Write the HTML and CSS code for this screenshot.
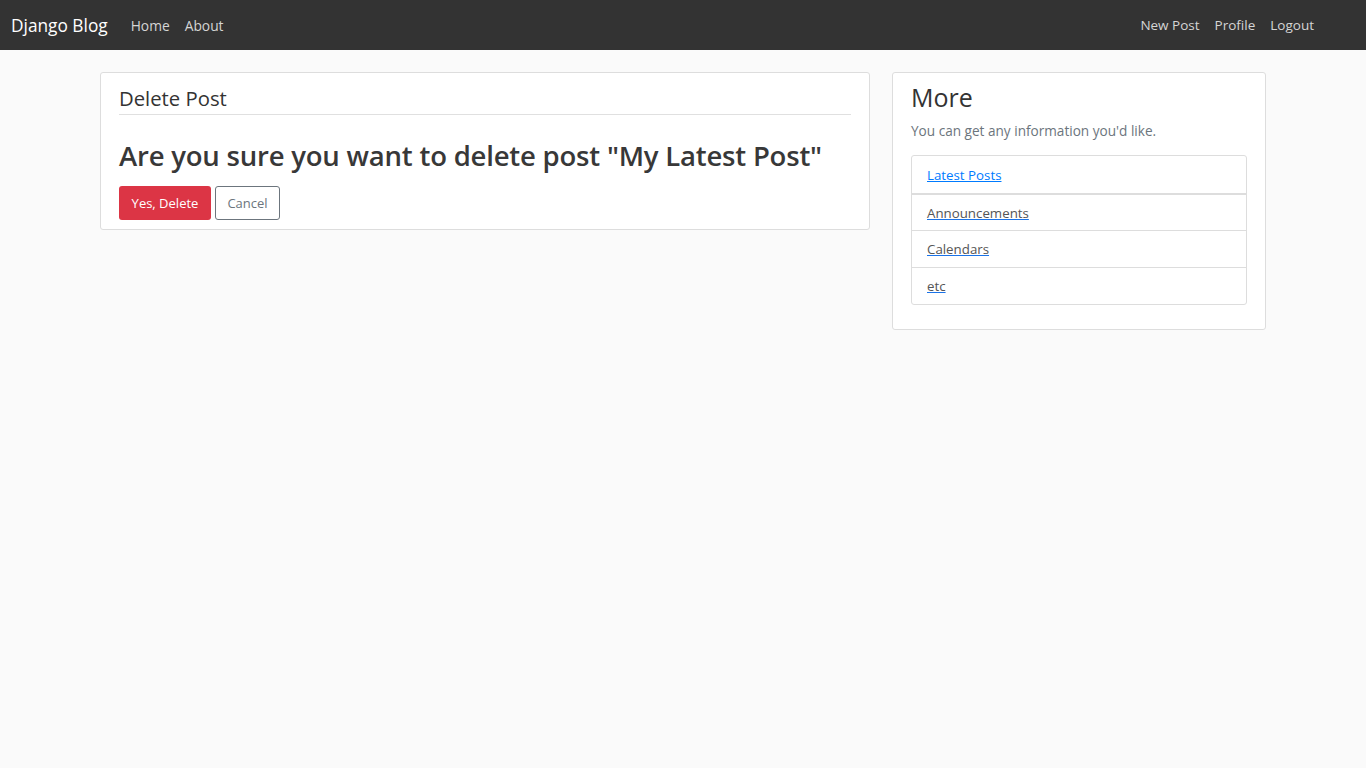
FILE: index.html
```html
<!DOCTYPE html>
<html lang="en">
<head>
<meta charset="utf-8">
<title>Django Blog</title>
<link rel="stylesheet" href="styles.css">
</head>
<body>
<header class="navbar">
  <div class="nav-left">
    <a class="brand" href="#">Django Blog</a>
    <a class="nav-link" href="#">Home</a>
    <a class="nav-link" href="#">About</a>
  </div>
  <div class="nav-right">
    <a class="nav-link" href="#">New Post</a>
    <a class="nav-link" href="#">Profile</a>
    <a class="nav-link" href="#">Logout</a>
  </div>
</header>
<main class="page">
  <section class="content-section main-col">
    <form class="delete-form">
      <fieldset class="fieldset">
        <legend class="legend">Delete Post</legend>
        <h2 class="confirm">Are you sure you want to delete post "My Latest Post"</h2>
      </fieldset>
      <div class="actions">
        <button type="button" class="btn btn-danger">Yes, Delete</button>
        <a class="btn btn-outline" href="#">Cancel</a>
      </div>
    </form>
  </section>
  <aside class="content-section side-col">
    <h3 class="side-title">More</h3>
    <p class="muted">You can get any information you'd like.</p>
    <ul class="list-group">
      <li class="list-item first"><a class="blue" href="#">Latest Posts</a></li>
      <li class="list-item"><a href="#">Announcements</a></li>
      <li class="list-item"><a href="#">Calendars</a></li>
      <li class="list-item"><a href="#">etc</a></li>
    </ul>
  </aside>
</main>
</body>
</html>
```
FILE: styles.css
```css
* { box-sizing: border-box; }
html, body { margin: 0; padding: 0; }
body {
  background: #fafafa;
  color: #333;
  font-family: "Open Sans", "Noto Sans", sans-serif;
  font-size: 14px;
}
a { text-decoration: none; }

.navbar {
  height: 50px;
  background: #333;
  display: flex;
  align-items: center;
  justify-content: space-between;
  padding: 0 52px 0 11px;
}
.nav-left, .nav-right { display: flex; align-items: center; }
.brand {
  color: #fff;
  font-size: 17.3px;
  margin-right: 23px;
}
.nav-link {
  color: #d5d5d5;
  font-size: 13.8px;
  margin-right: 15px;
}
.nav-right .nav-link { font-size: 13.5px; margin-right: 15px; }
.nav-right .nav-link:last-child { margin-right: 0; }

.page {
  display: flex;
  align-items: flex-start;
  gap: 22px;
  padding: 22px 100px 0;
}
.content-section {
  background: #fff;
  border: 1px solid #ddd;
  border-radius: 3px;
}
.main-col {
  width: 770px;
  padding: 9px 18px 9px;
}
.side-col {
  width: 374px;
  padding: 7px 18px 24px;
}
.fieldset { border: 0; margin: 0; padding: 0; }
.legend {
  width: 100%;
  font-size: 20.3px;
  line-height: 32px;
  padding: 0;
  border-bottom: 1px solid #e0e0e0;
  color: #333;
}
.confirm {
  font-size: 27.5px;
  font-weight: 600;
  line-height: 36px;
  margin: 23px 0 12px;
  color: #383838;
  letter-spacing: -0.2px;
}
.actions { display: flex; gap: 4px; }
.btn {
  display: inline-flex;
  align-items: center;
  height: 34px;
  padding: 0 10px;
  border-radius: 3px;
  font-family: inherit;
  font-size: 13px;
  border: 1px solid transparent;
  cursor: pointer;
}
.btn-danger {
  background: #dc3545;
  color: #fff;
  width: 92px;
  justify-content: center;
}
.btn-outline {
  background: #fff;
  border-color: #6c757d;
  color: #6c757d;
  width: 65px;
  justify-content: center;
}

.side-title {
  font-size: 25px;
  font-weight: 500;
  line-height: 34px;
  margin: 0;
  color: #333;
}
.muted {
  color: #6c757d;
  font-size: 13.6px;
  margin: 7px 0 15px;
}
.list-group {
  list-style: none;
  margin: 0;
  padding: 0;
  border: 1px solid #ddd;
  border-radius: 3px;
}
.list-item {
  height: 37px;
  display: flex;
  align-items: center;
  padding: 0 15px;
  border-top: 1px solid #ddd;
  font-size: 13.3px;
}
.list-item:first-child { border-top: 0; height: 37px; }
.list-item:nth-child(2) { border-top: 2px solid #ddd; }
.list-item a {
  color: #555;
  text-decoration: underline;
  text-decoration-color: #1a73e8;
}
.list-item a.blue { color: #007bff; text-decoration-color: #007bff; }
```
